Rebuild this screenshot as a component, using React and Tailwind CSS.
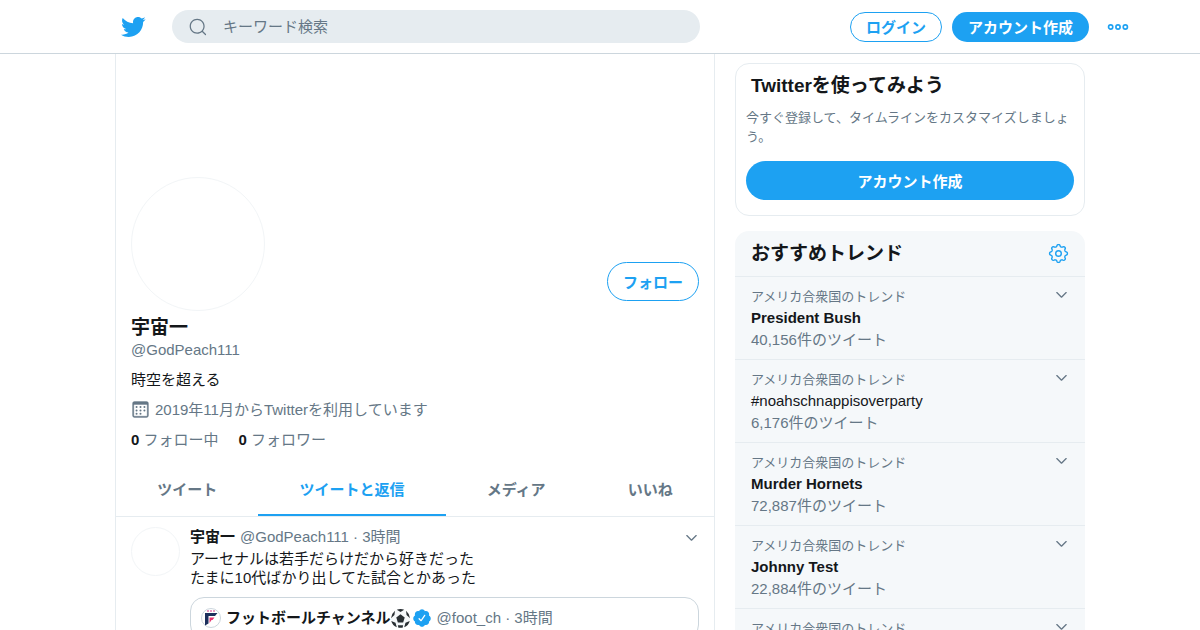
import React from "react";
import clsx from "clsx";

const TRENDS = [
  { name: "President Bush", count: "40,156" },
  { name: "#noahschnappisoverparty", count: "6,176", hashtag: true },
  { name: "Murder Hornets", count: "72,887" },
  { name: "Johnny Test", count: "22,884" },
  { name: "Don Shula", count: "51,302" },
];

const TABS = ["ツイート", "ツイートと返信", "メディア", "いいね"];

// outline of a cog with eight rounded teeth
const GEAR_POINTS = Array.from({ length: 96 }, (_, i) => {
  const angle = (i / 96) * Math.PI * 2;
  const wave = Math.cos(angle * 8);
  const radius = 9.1 + 1.1 * Math.sign(wave) * Math.sqrt(Math.abs(wave));
  return `${(12 + radius * Math.sin(angle)).toFixed(2)},${(12 - radius * Math.cos(angle)).toFixed(2)}`;
}).join(" ");

const BirdIcon = ({ className }) => (
  <svg viewBox="0 0 24 24" fill="currentColor" className={className}>
    <path d="M23.643 4.937c-.835.37-1.732.62-2.675.733.962-.576 1.7-1.49 2.048-2.578-.9.534-1.897.922-2.958 1.13-.85-.904-2.06-1.47-3.4-1.47-2.572 0-4.658 2.086-4.658 4.66 0 .364.042.718.12 1.06-3.873-.195-7.304-2.05-9.602-4.868-.4.69-.63 1.49-.63 2.342 0 1.616.823 3.043 2.072 3.878-.764-.025-1.482-.234-2.11-.583v.06c0 2.257 1.605 4.14 3.737 4.568-.392.106-.803.162-1.227.162-.3 0-.593-.028-.877-.082.593 1.85 2.313 3.198 4.352 3.234-1.595 1.25-3.604 1.995-5.786 1.995-.376 0-.747-.022-1.112-.065 2.062 1.323 4.51 2.093 7.14 2.093 8.57 0 13.255-7.098 13.255-13.254 0-.2-.005-.402-.014-.602.91-.658 1.7-1.477 2.323-2.41z" />
  </svg>
);

const SearchIcon = ({ className }) => (
  <svg viewBox="0 0 24 24" fill="currentColor" className={className}>
    <path d="M21.53 20.47l-3.66-3.66C19.195 15.24 20 13.214 20 11c0-4.97-4.03-9-9-9s-9 4.03-9 9 4.03 9 9 9c2.215 0 4.24-.804 5.808-2.13l3.66 3.66c.147.146.34.22.53.22s.385-.073.53-.22c.295-.293.295-.767.002-1.06zM3.5 11c0-4.135 3.365-7.5 7.5-7.5s7.5 3.365 7.5 7.5-3.365 7.5-7.5 7.5-7.5-3.365-7.5-7.5z" />
  </svg>
);

const DotsIcon = ({ className }) => (
  <svg viewBox="0 0 24 24" fill="none" stroke="currentColor" strokeWidth="1.8" className={className}>
    <circle cx="4" cy="12" r="2.3" />
    <circle cx="12" cy="12" r="2.3" />
    <circle cx="20" cy="12" r="2.3" />
  </svg>
);

const ChevronIcon = ({ className }) => (
  <svg viewBox="0 0 24 24" fill="currentColor" className={className}>
    <path d="M20.207 8.147c-.39-.39-1.023-.39-1.414 0L12 14.94 5.207 8.147c-.39-.39-1.023-.39-1.414 0-.39.39-.39 1.023 0 1.414l7.5 7.5c.195.196.45.294.707.294s.512-.098.707-.293l7.5-7.5c.39-.39.39-1.022 0-1.413z" />
  </svg>
);

const CalendarIcon = ({ className }) => (
  <svg viewBox="0 0 24 24" fill="currentColor" className={className}>
    <path
      stroke="currentColor"
      strokeWidth="0.5"
      d="M19.708 2H4.292C3.028 2 2 3.028 2 4.292v15.416C2 20.972 3.028 22 4.292 22h15.416C20.972 22 22 20.972 22 19.708V4.292C22 3.028 20.972 2 19.708 2zm.792 17.708c0 .437-.355.792-.792.792H4.292c-.437 0-.792-.355-.792-.792V6.418c0-.437.354-.79.79-.792h15.42c.436 0 .79.355.79.79V19.71z"
    />
    <circle cx="7.032" cy="8.75" r="1.285" />
    <circle cx="12" cy="8.75" r="1.285" />
    <circle cx="16.968" cy="8.75" r="1.285" />
    <circle cx="7.032" cy="13.156" r="1.285" />
    <circle cx="12" cy="13.156" r="1.285" />
    <circle cx="16.968" cy="13.156" r="1.285" />
    <circle cx="7.032" cy="17.486" r="1.285" />
    <circle cx="12" cy="17.486" r="1.285" />
  </svg>
);

const GearIcon = ({ className }) => (
  <svg
    viewBox="0 0 24 24"
    fill="none"
    stroke="currentColor"
    strokeWidth="1.6"
    strokeLinejoin="round"
    className={className}
  >
    <polygon points={GEAR_POINTS} />
    <circle cx="12" cy="12" r="3.2" />
  </svg>
);

const VerifiedIcon = ({ className }) => (
  <svg viewBox="0 0 24 24" fill="currentColor" className={className}>
    <path d="M22.5 12.5c0-1.58-.875-2.95-2.148-3.6.154-.435.238-.905.238-1.4 0-2.21-1.71-3.998-3.818-3.998-.47 0-.92.084-1.336.25C14.818 2.415 13.51 1.5 12 1.5s-2.816.917-3.437 2.25c-.415-.165-.866-.25-1.336-.25-2.11 0-3.818 1.79-3.818 4 0 .494.083.964.237 1.4-1.272.65-2.147 2.018-2.147 3.6 0 1.495.782 2.798 1.942 3.486-.02.17-.032.34-.032.514 0 2.21 1.708 4 3.818 4 .47 0 .92-.086 1.335-.25.62 1.334 1.926 2.25 3.437 2.25 1.512 0 2.818-.916 3.437-2.25.415.163.865.248 1.336.248 2.11 0 3.818-1.79 3.818-4 0-.174-.012-.344-.033-.513 1.158-.687 1.943-1.99 1.943-3.484zm-6.616-3.334l-4.334 6.5c-.145.217-.382.334-.625.334-.143 0-.288-.04-.416-.126l-.115-.094-2.415-2.415c-.293-.293-.293-.768 0-1.06s.768-.294 1.06 0l1.77 1.767 3.825-5.74c.23-.345.696-.436 1.04-.207.346.23.44.696.21 1.04z" />
  </svg>
);

const BallIcon = ({ className }) => (
  <svg viewBox="0 0 36 36" className={className}>
    <circle cx="18" cy="18" r="18" fill="#f5f8fa" />
    <g fill="#292f33">
      <path d="M18 10l8 6-3 9.500h-10l-3-9.500z" />
      <path d="M11 1.5Q18-1.500 25 1.500L18 5.500z" />
      <path d="M28.500 3.500Q35 9 36 17.500L29.500 11.500z" />
      <path d="M7.500 3.500Q1 9 0 17.500L6.500 11.500z" />
      <path d="M35.500 22.500Q33 31.500 25 34.500L27.500 26z" />
      <path d="M.5 22.500Q3 31.500 11 34.500L8.500 26z" />
      <path d="M13 31h10l-1 4.500h-8z" />
    </g>
  </svg>
);

// small round avatar of the quoted account
const ChannelAvatar = ({ className }) => (
  <svg viewBox="0 0 20 20" className={className}>
    <circle cx="10" cy="10" r="9.500" fill="#fff" stroke="#ccd6dd" strokeWidth="1" />
    <path d="M6 2h2v2H6zM9 2h2v2H9zM12 2h2v2h-2z" fill="#e99ac2" />
    <path d="M4 5h12.500l-2.500 3H7.500v7.500L4 17.500z" fill="#1c2f5c" />
    <path d="M8.500 9.500h5l-2 2.500h-1l-2 3z" fill="#e5316f" />
  </svg>
);

const Header = () => (
  <header className="sticky top-0 z-10 border-b border-[#ccd6dd] bg-white">
    <div className="mx-auto flex h-[53px] max-w-[1080px] items-center px-[60px] pr-[11px]">
      <a href="#home" aria-label="Twitter" className="text-[#1da1f2]">
        <BirdIcon className="size-[26px]" />
      </a>
      <form className="ml-[26px] flex h-[33px] max-w-[528px] flex-1 items-center rounded-full bg-[#e6ecf0] pl-4 pr-3 text-[#657786]">
        <SearchIcon className="size-5 shrink-0" />
        <input
          type="text"
          aria-label="キーワード検索"
          placeholder="キーワード検索"
          className="ml-[15px] min-w-0 flex-1 bg-transparent pt-0.5 text-[15px] outline-none placeholder:text-[#657786]"
        />
      </form>
      <div className="ml-auto flex items-center">
        <button className="h-[30px] rounded-full border border-[#1da1f2] px-[15px] pt-0.5 text-[15px] leading-5 font-bold text-[#1da1f2]">
          ログイン
        </button>
        <button className="ml-[10px] h-[30px] rounded-full bg-[#1da1f2] px-4 pt-0.5 text-[15px] leading-5 font-bold text-white">
          アカウント作成
        </button>
        <button aria-label="もっと見る" className="ml-[18px] text-[#1da1f2]">
          <DotsIcon className="size-[22px]" />
        </button>
      </div>
    </div>
  </header>
);

const Profile = () => (
  <section className="px-[15px] pt-[123px]">
    <div className="flex items-end justify-between">
      <div className="size-[134px] rounded-full border border-[#f2f5f7]" />
      <button className="mb-[10px] h-[39px] rounded-full border border-[#1da1f2] px-[15px] pt-0.5 text-[15px] leading-5 font-bold text-[#1da1f2]">
        フォロー
      </button>
    </div>
    <h1 className="mt-1 text-[19px] leading-[25px] font-bold">宇宙一</h1>
    <p className="text-[15px] leading-5 text-[#657786]">@GodPeach111</p>
    <p className="mt-[10px] text-[15px] leading-5">時空を超える</p>
    <p className="mt-[10px] flex items-start text-[15px] leading-5 text-[#657786]">
      <CalendarIcon className="mr-[5px] size-[19px]" />
      2019年11月からTwitterを利用しています
    </p>
    <div className="mt-[10px] flex gap-5 text-[15px] leading-5 text-[#657786]">
      <a href="#following">
        <b className="text-[#14171a]">0</b> フォロー中
      </a>
      <a href="#followers">
        <b className="text-[#14171a]">0</b> フォロワー
      </a>
    </div>
  </section>
);

const Tabs = () => (
  <nav className="mt-[14px] flex border-b border-[#e6ecf0]">
    {TABS.map((tab, index) => (
      <a
        key={tab}
        href="#tab"
        className={clsx(
          "flex h-[52px] grow items-center justify-center border-b-2 pt-0.5 text-[15px] font-bold",
          index === 1
            ? "border-[#1da1f2] text-[#1da1f2]"
            : "border-transparent text-[#657786]"
        )}
      >
        {tab}
      </a>
    ))}
  </nav>
);

const Tweet = () => (
  <article className="flex px-[15px] pt-[10px]">
    <div className="mr-[10px] size-[49px] shrink-0 rounded-full border border-[#f2f5f7]" />
    <div className="min-w-0 flex-1 text-[15px]">
      <div className="flex items-center leading-5">
        <span className="font-bold">宇宙一</span>
        <span className="ml-[5px] text-[#657786]">@GodPeach111 · 3時間</span>
        <button aria-label="その他" className="ml-auto text-[#657786]">
          <ChevronIcon className="size-[15px]" />
        </button>
      </div>
      <p className="mt-[2px] leading-[19px]">
        アーセナルは若手だらけだから好きだった
        <br />
        たまに10代ばかり出してた試合とかあった
      </p>
      <div className="mt-[10px] rounded-[14px] border border-[#ccd6dd] px-[10px] py-[10px]">
        <div className="flex items-center leading-5">
          <ChannelAvatar className="mr-[5px] size-5" />
          <span className="font-bold">フットボールチャンネル</span>
          <BallIcon className="size-[19px]" />
          <VerifiedIcon className="ml-[2px] size-5 text-[#1da1f2]" />
          <span className="ml-[5px] text-[#657786]">@foot_ch · 3時間</span>
        </div>
      </div>
    </div>
  </article>
);

const SignupCard = () => (
  <section className="rounded-[14px] border border-[#e6ecf0] px-[10px] pt-[9px] pb-[15px]">
    <h2 className="px-[5px] text-[19px] leading-[25px] font-bold">Twitterを使ってみよう</h2>
    <p className="mt-[10px] text-[13px] leading-[19px] text-[#657786]">
      今すぐ登録して、タイムラインをカスタマイズしましょう。
    </p>
    <button className="mt-[15px] h-[39px] w-full rounded-full bg-[#1da1f2] pt-0.5 text-[15px] leading-5 font-bold text-white">
      アカウント作成
    </button>
  </section>
);

const TrendItem = ({ trend }) => (
  <li className="border-t border-[#e6ecf0] px-4 pt-[10px] pb-[9px]">
    <div className="flex items-start justify-between text-[13px] leading-5 text-[#657786]">
      アメリカ合衆国のトレンド
      <button aria-label="その他">
        <ChevronIcon className="size-[15px]" />
      </button>
    </div>
    <p className={clsx("text-[15px] leading-[22px]", trend.hashtag ? "font-normal" : "font-bold")}>
      {trend.name}
    </p>
    <p className="text-[15px] leading-[21px] text-[#657786]">{trend.count}件のツイート</p>
  </li>
);

const Trends = () => (
  <section className="mt-[15px] rounded-t-[14px] bg-[#f5f8fa]">
    <div className="flex h-[45px] items-center justify-between px-4">
      <h2 className="text-[19px] leading-[25px] font-bold">おすすめトレンド</h2>
      <button aria-label="設定" className="text-[#1da1f2]">
        <GearIcon className="size-[21px]" />
      </button>
    </div>
    <ul>
      {TRENDS.map((trend) => (
        <TrendItem key={trend.name} trend={trend} />
      ))}
    </ul>
  </section>
);

export default function App() {
  return (
    <div className="h-screen overflow-hidden bg-white font-['Liberation_Sans','Noto_Sans_CJK_JP',sans-serif] text-[#14171a]">
      <Header />
      <div className="mx-auto flex max-w-[970px] gap-5">
        <main className="min-h-screen max-w-[600px] flex-1 border-x border-[#e6ecf0]">
          <Profile />
          <Tabs />
          <Tweet />
        </main>
        <aside className="w-[350px] pt-[9px]">
          <SignupCard />
          <Trends />
        </aside>
      </div>
    </div>
  );
}
